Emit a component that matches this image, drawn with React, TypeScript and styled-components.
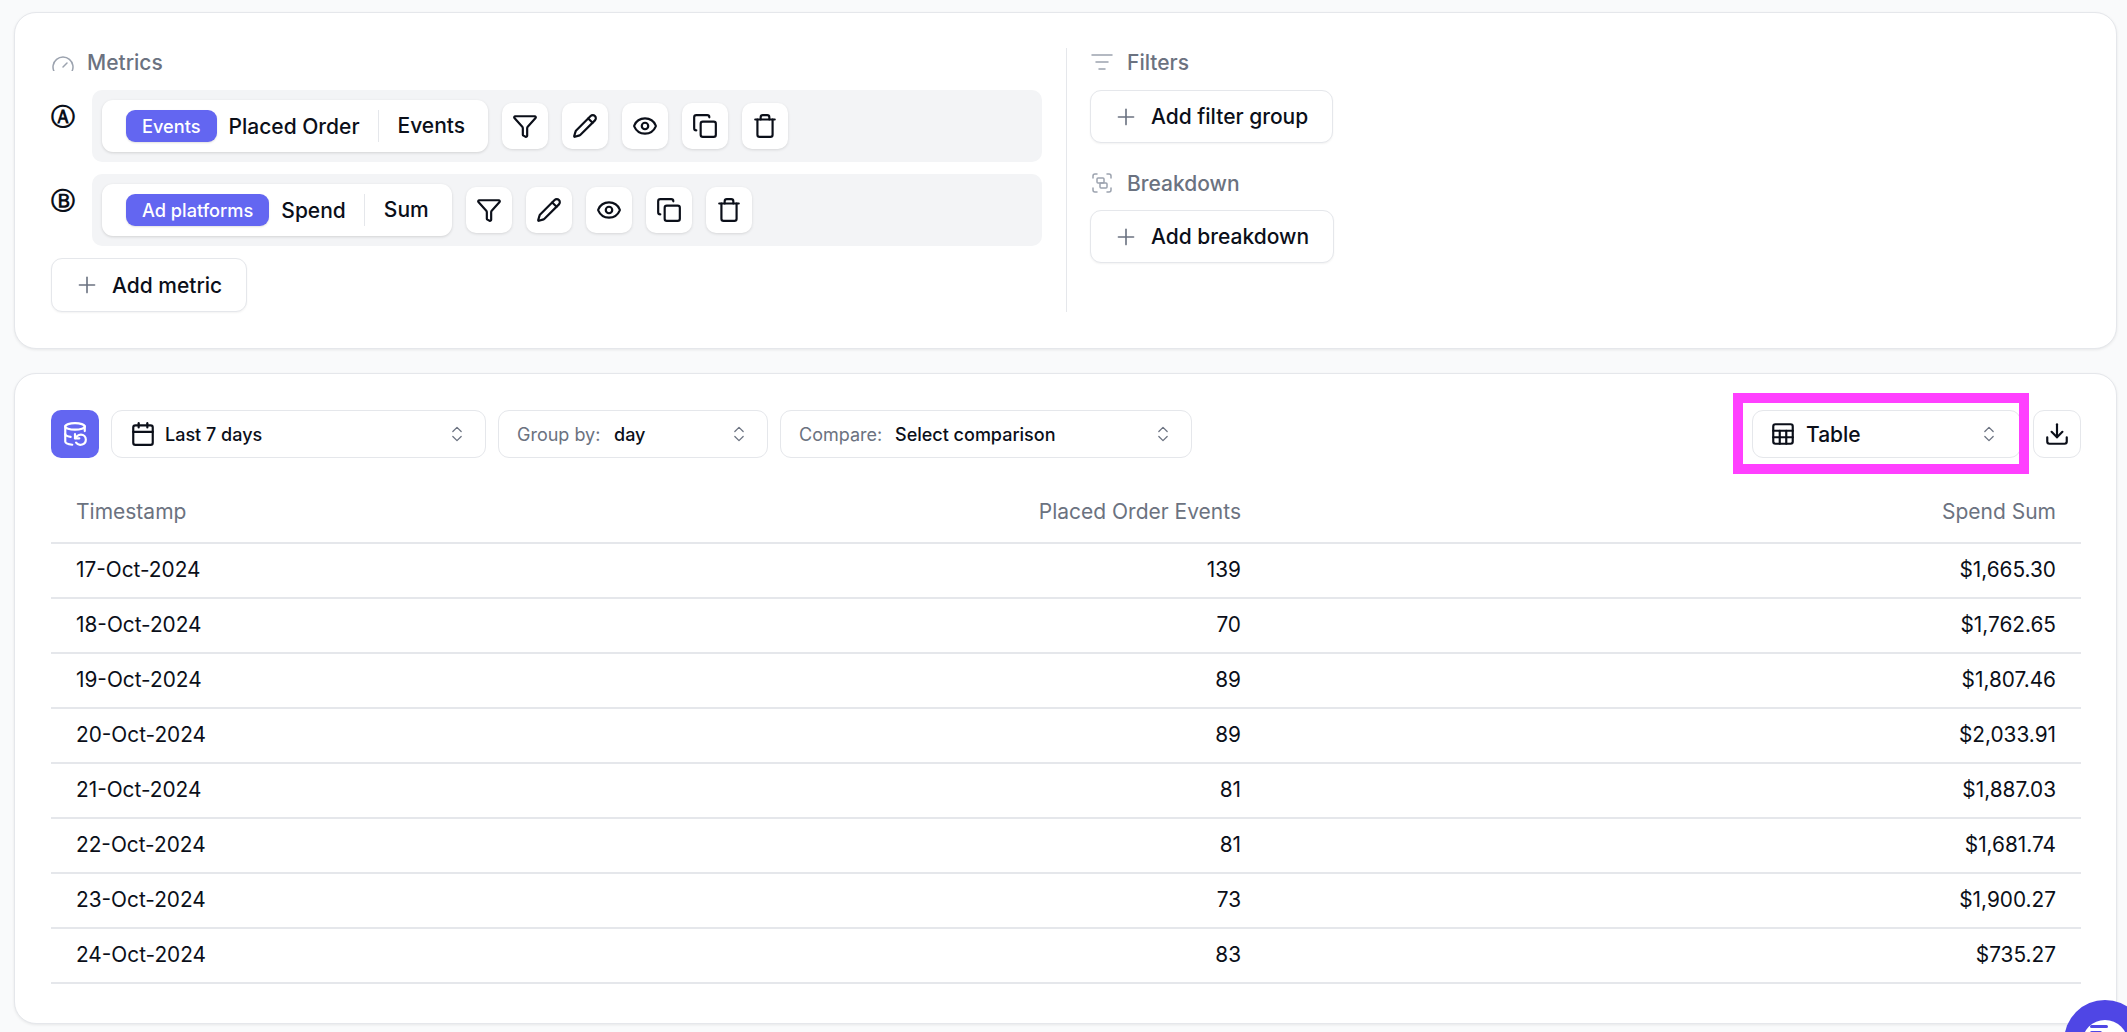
import {
  ChevronsUpDown,
  Calendar,
  Copy,
  DatabaseBackup,
  Download,
  Eye,
  Funnel,
  Gauge,
  Group,
  ListFilter,
  Pencil,
  Plus,
  Sheet,
  Trash,
} from "lucide-react";
import styled, { createGlobalStyle } from "styled-components";

const GlobalStyle = createGlobalStyle`
  html, body {
    margin: 0;
    height: 100%;
    overflow: hidden;
    background: #f9fafb;
    font-family: Inter, "Liberation Sans", sans-serif;
    color: #0b0f19;
  }
`;

const Page = styled.div`
  display: flex;
  flex-direction: column;
  gap: 24px;
  padding: 12px 10px 0 14px;
`;

const Card = styled.section`
  background: #fff;
  border: 1px solid #e5e7eb;
  border-radius: 22px;
  box-shadow: 0 1px 3px rgb(0 0 0 / 0.08);
`;

const QueryCard = styled(Card)`
  display: flex;
  height: 337px;
  box-sizing: border-box;
  padding: 35px 36px 0;
`;

const MetricsColumn = styled.div`
  display: flex;
  flex-direction: column;
  width: 991px;
  gap: 12px;
`;

const SideColumn = styled.div`
  display: flex;
  flex-direction: column;
  align-items: flex-start;
  height: 264px;
  margin-left: 24px;
  padding-left: 23px;
  border-left: 1px solid #e5e7eb;
`;

const SectionLabel = styled.div<{ $top?: number }>`
  display: flex;
  align-items: center;
  gap: 13px;
  height: 28px;
  margin-top: ${(p) => p.$top ?? 0}px;
  margin-bottom: ${(p) => (p.$top ? 13 : 14)}px;
  font-size: 21px;
  font-weight: 500;
  color: #6b7280;

  svg {
    color: #9ca3af;
    flex: none;
  }
`;

const MetricsLabel = styled(SectionLabel)`
  gap: 12px;
  margin-bottom: 2px;
`;

const GaugeClip = styled.span`
  display: block;
  width: 24px;
  height: 18px;
  overflow: hidden;
`;

const MetricRow = styled.div`
  display: flex;
  align-items: flex-start;
`;

const RowLetter = styled.div`
  width: 41px;
  padding-top: 10px;
  font-family: "DejaVu Sans", sans-serif;
  font-size: 24px;
  font-weight: 700;
  line-height: 34px;
`;

const MetricTrack = styled.div`
  display: flex;
  flex: 1;
  align-items: center;
  gap: 14px;
  height: 72px;
  box-sizing: border-box;
  padding: 0 10px;
  background: #f3f4f6;
  border-radius: 10px;
`;

const MetricPill = styled.div`
  display: flex;
  align-items: center;
  height: 52px;
  box-sizing: border-box;
  padding: 0 23px 0 24px;
  background: #fff;
  border-radius: 11px;
  box-shadow: 0 1px 3px rgb(0 0 0 / 0.14);
  font-size: 21px;
  font-weight: 450;
`;

const SourceBadge = styled.span`
  display: flex;
  align-items: center;
  height: 32px;
  padding: 0 16px;
  margin-right: 12px;
  background: #6366f1;
  border-radius: 9px;
  color: #fff;
  font-size: 18.2px;
  font-weight: 500;
  box-shadow: 0 1px 2px rgb(0 0 0 / 0.12);
`;

const Aggregation = styled.span`
  margin-left: 18px;
  padding-left: 19px;
  border-left: 1px solid #e5e7eb;
  line-height: 32px;
`;

const IconButton = styled.button`
  display: flex;
  align-items: center;
  justify-content: center;
  width: 46px;
  height: 46px;
  padding: 0;
  border: 0;
  background: #fff;
  border-radius: 10px;
  color: #0b0f19;
  box-shadow: 0 1px 3px rgb(0 0 0 / 0.12);
`;

const AddButton = styled.button`
  display: flex;
  align-items: center;
  align-self: flex-start;
  gap: 12px;
  height: 54px;
  box-sizing: border-box;
  padding: 0 24px 0 22px;
  background: #fff;
  border: 1px solid #e5e7eb;
  border-radius: 11px;
  box-shadow: 0 1px 2px rgb(0 0 0 / 0.05);
  font-family: inherit;
  font-size: 21px;
  font-weight: 450;
  color: #0b0f19;

  svg {
    color: #6b7280;
    flex: none;
  }
`;

const SideAddButton = styled(AddButton)`
  height: 53px;
`;

const ResultCard = styled(Card)`
  height: 651px;
  box-sizing: border-box;
  padding: 36px 35px 0 36px;
`;

const Toolbar = styled.div`
  display: flex;
  align-items: center;
  gap: 12px;
  height: 48px;
`;

const SourceButton = styled.button`
  display: flex;
  align-items: center;
  justify-content: center;
  width: 48px;
  height: 48px;
  padding: 0;
  border: 0;
  border-radius: 10px;
  background: #6366f1;
  color: #fff;
`;

const SelectBox = styled.div<{ $width: number }>`
  display: flex;
  align-items: center;
  width: ${(p) => p.$width}px;
  height: 48px;
  box-sizing: border-box;
  padding: 0 18px;
  background: #fff;
  border: 1px solid #e5e7eb;
  border-radius: 11px;
  font-size: 18px;
  font-weight: 450;
`;

const ViewSelect = styled(SelectBox)`
  padding: 0 21px 0 17px;
`;

const SelectIcon = styled.span`
  display: flex;
  margin-right: 9px;
`;

const SelectPrefix = styled.span<{ $width: number }>`
  width: ${(p) => p.$width}px;
  font-weight: 400;
  color: #6b7280;
`;

const SelectValue = styled.span`
  flex: 1;
`;

const TableValue = styled(SelectValue)`
  font-size: 21px;
  padding-left: 1px;
`;

const Chevrons = styled(ChevronsUpDown)`
  color: #6b7280;
  flex: none;
`;

const ToolbarSpacer = styled.div`
  flex: 1;
`;

const Highlighted = styled.div`
  position: relative;

  &::after {
    content: "";
    position: absolute;
    inset: -17px -8px -16px -19px;
    border: 10px solid #ff40ff;
    pointer-events: none;
  }
`;

const DownloadButton = styled.button`
  display: flex;
  align-items: center;
  justify-content: center;
  width: 48px;
  height: 48px;
  padding: 0;
  background: #fff;
  border: 1px solid #e5e7eb;
  border-radius: 11px;
  color: #0b0f19;
`;

const DataGrid = styled.div`
  margin-top: 31px;
`;

const GridRow = styled.div<{ $head?: boolean }>`
  display: grid;
  grid-template-columns: 583px 582px 1fr;
  align-items: center;
  height: 55px;
  box-sizing: border-box;
  padding: 0 25px ${(p) => (p.$head ? 8 : 2)}px;
  border-bottom: 2px solid #e5e7eb;
  font-size: ${(p) => (p.$head ? 21 : 20.8)}px;
  color: ${(p) => (p.$head ? "#6b7280" : "#0b0f19")};
`;

const NumberCell = styled.span`
  text-align: right;
`;

const ChatBubble = styled.div`
  position: fixed;
  left: 2064px;
  top: 1000px;
  display: flex;
  justify-content: center;
  padding-top: 20px;
  width: 82px;
  height: 82px;
  box-sizing: border-box;
  border-radius: 50%;
  background: #4f46e5;
`;

const ChatFace = styled.span`
  display: flex;
  flex-direction: column;
  align-items: flex-start;
  gap: 3px;
  width: 46px;
  height: 46px;
  box-sizing: border-box;
  padding: 5px 0 0 8px;
  border-radius: 50%;
  background: #fff;

  i {
    display: block;
    height: 3px;
    border-radius: 2px;
    background: #4f46e5;
  }
  i:first-child {
    width: 18px;
  }
  i:last-child {
    width: 12px;
  }
`;

const metricActions = [Funnel, Pencil, Eye, Copy, Trash];

const metrics = [
  { letter: "Ⓐ", source: "Events", name: "Placed Order", agg: "Events" },
  { letter: "Ⓑ", source: "Ad platforms", name: "Spend", agg: "Sum" },
];

const rows = [
  ["17-Oct-2024", "139", "$1,665.30"],
  ["18-Oct-2024", "70", "$1,762.65"],
  ["19-Oct-2024", "89", "$1,807.46"],
  ["20-Oct-2024", "89", "$2,033.91"],
  ["21-Oct-2024", "81", "$1,887.03"],
  ["22-Oct-2024", "81", "$1,681.74"],
  ["23-Oct-2024", "73", "$1,900.27"],
  ["24-Oct-2024", "83", "$735.27"],
];

export default function App() {
  return (
    <Page>
      <GlobalStyle />

      <QueryCard>
        <MetricsColumn>
          <MetricsLabel>
            <GaugeClip>
              <Gauge size={24} strokeWidth={1.5} />
            </GaugeClip>
            Metrics
          </MetricsLabel>

          {metrics.map((m) => (
            <MetricRow key={m.letter}>
              <RowLetter>{m.letter}</RowLetter>
              <MetricTrack>
                <MetricPill>
                  <SourceBadge>{m.source}</SourceBadge>
                  {m.name}
                  <Aggregation>{m.agg}</Aggregation>
                </MetricPill>
                {metricActions.map((Icon, i) => (
                  <IconButton key={i}>
                    <Icon size={26} strokeWidth={2} />
                  </IconButton>
                ))}
              </MetricTrack>
            </MetricRow>
          ))}

          <AddButton>
            <Plus size={26} strokeWidth={1.5} />
            Add metric
          </AddButton>
        </MetricsColumn>

        <SideColumn>
          <SectionLabel>
            <ListFilter size={24} strokeWidth={1.5} />
            Filters
          </SectionLabel>
          <SideAddButton>
            <Plus size={26} strokeWidth={1.5} />
            Add filter group
          </SideAddButton>

          <SectionLabel $top={26}>
            <Group size={24} strokeWidth={1.5} />
            Breakdown
          </SectionLabel>
          <SideAddButton>
            <Plus size={26} strokeWidth={1.5} />
            Add breakdown
          </SideAddButton>
        </SideColumn>
      </QueryCard>

      <ResultCard>
        <Toolbar>
          <SourceButton>
            <DatabaseBackup size={26} strokeWidth={2} />
          </SourceButton>

          <SelectBox $width={375}>
            <SelectIcon>
              <Calendar size={26} strokeWidth={2} />
            </SelectIcon>
            <SelectValue>Last 7 days</SelectValue>
            <Chevrons size={20} strokeWidth={1.5} />
          </SelectBox>

          <SelectBox $width={270}>
            <SelectPrefix $width={97}>Group by:</SelectPrefix>
            <SelectValue>day</SelectValue>
            <Chevrons size={20} strokeWidth={1.5} />
          </SelectBox>

          <SelectBox $width={412}>
            <SelectPrefix $width={96}>Compare:</SelectPrefix>
            <SelectValue>Select comparison</SelectValue>
            <Chevrons size={20} strokeWidth={1.5} />
          </SelectBox>

          <ToolbarSpacer />

          <Highlighted>
            <ViewSelect $width={269}>
              <SelectIcon>
                <Sheet size={26} strokeWidth={2} />
              </SelectIcon>
              <TableValue>Table</TableValue>
              <Chevrons size={20} strokeWidth={1.5} />
            </ViewSelect>
          </Highlighted>

          <DownloadButton>
            <Download size={26} strokeWidth={2} />
          </DownloadButton>
        </Toolbar>

        <DataGrid>
          <GridRow $head>
            <span>Timestamp</span>
            <NumberCell>Placed Order Events</NumberCell>
            <NumberCell>Spend Sum</NumberCell>
          </GridRow>
          {rows.map((r) => (
            <GridRow key={r[0]}>
              <span>{r[0]}</span>
              <NumberCell>{r[1]}</NumberCell>
              <NumberCell>{r[2]}</NumberCell>
            </GridRow>
          ))}
        </DataGrid>
      </ResultCard>

      <ChatBubble>
        <ChatFace>
          <i />
          <i />
        </ChatFace>
      </ChatBubble>
    </Page>
  );
}
